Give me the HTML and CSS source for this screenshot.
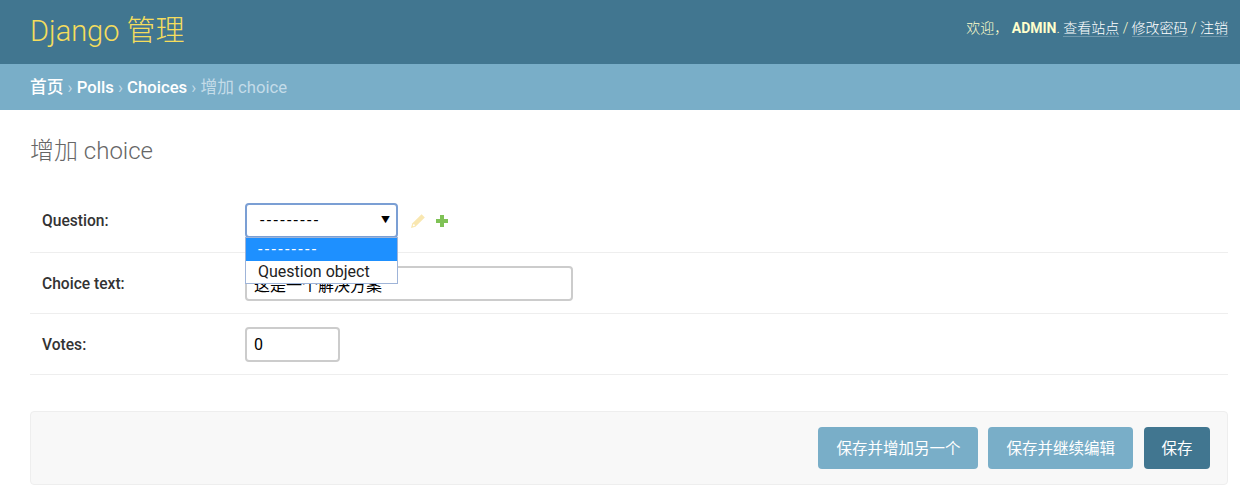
FILE: index.html
```html
<!DOCTYPE html>
<html lang="zh-CN">
<head>
    <meta charset="UTF-8">
    <meta name="viewport" content="width=device-width, initial-scale=1.0">
    <title>增加 choice</title>
    <link rel="stylesheet" href="styles.css">
</head>
<body>

<div class="header">
    <div class="branding">Django 管理</div>
    <div class="user-tools">
        欢迎， <strong>ADMIN</strong>. <a href="#">查看站点</a> / <a href="#">修改密码</a> / <a href="#">注销</a>
    </div>
</div>

<div class="breadcrumbs">
    <a href="#">首页</a> › <a href="#">Polls</a> › <a href="#">Choices</a> › 增加 choice
</div>

<div class="content">
    <h1>增加 choice</h1>

    <form>
        <div class="form-row row-first">
            <label class="field-label">Question:</label>
            <div class="select-wrap">
                <div class="select-box">
                    <span class="dashes">---------</span>
                    <span class="select-arrow">▼</span>
                </div>
                <ul class="select-menu">
                    <li class="selected"><span class="dashes">---------</span></li>
                    <li>Question object</li>
                </ul>
            </div>
            <a href="#" class="related-link" aria-label="修改">
                <svg width="16" height="16" viewBox="0 0 16 16">
                    <path d="M11.6 1.2 14.8 4.4 5.4 13.8 1 15 2.2 10.6Z" fill="#f9e7b0"/>
                    <circle cx="3.8" cy="12.2" r="1" fill="#fff"/>
                </svg>
            </a>
            <a href="#" class="related-link" aria-label="增加">
                <svg width="14" height="14" viewBox="0 0 14 14">
                    <path d="M5 1H9V5H13V9H9V13H5V9H1V5H5Z" fill="#7fc256"/>
                </svg>
            </a>
        </div>

        <div class="form-row">
            <label class="field-label">Choice text:</label>
            <input class="text-input wide" type="text" value="这是一个解决方案">
        </div>

        <div class="form-row">
            <label class="field-label">Votes:</label>
            <input class="text-input narrow" type="text" value="0">
        </div>

        <div class="submit-row">
            <button type="button" class="button">保存并增加另一个</button>
            <button type="button" class="button">保存并继续编辑</button>
            <button type="button" class="button default">保存</button>
        </div>
    </form>
</div>

</body>
</html>
```

FILE: styles.css
```css
body {
    margin: 0;
    font-family: Roboto, "Noto Sans CJK SC", sans-serif;
    font-size: 17px;
    color: #333;
    background: #fff;
}
a {
    text-decoration: none;
}
.header {
    height: 64px;
    box-sizing: border-box;
    padding: 0 12px 0 30px;
    display: flex;
    justify-content: space-between;
    align-items: center;
    background: #417690;
    color: #ffc;
}
.branding {
    font-size: 29px;
    font-weight: 300;
    color: #f5dd5d;
    padding-bottom: 9px;
}
.user-tools {
    font-size: 14px;
    font-weight: 300;
    padding-bottom: 10px;
}
.user-tools strong {
    font-weight: 700;
}
.user-tools a {
    color: #fff;
    border-bottom: 1px solid rgba(255, 255, 255, 0.25);
}
.breadcrumbs {
    height: 46px;
    box-sizing: border-box;
    padding: 0 30px;
    line-height: 48px;
    background: #79aec8;
    color: #c4dce8;
    font-size: 16.7px;
}
.breadcrumbs a {
    color: #fff;
    font-weight: 500;
}
.content {
    padding: 25px 12px 6px 30px;
}
h1 {
    margin: 0 0 21px;
    font-size: 24px;
    font-weight: 300;
    line-height: 32px;
    color: #666;
}
.form-row {
    display: flex;
    align-items: center;
    padding: 13px 0 12px 12px;
    border-bottom: 1px solid #eee;
}
.row-first {
    padding-top: 15px;
    padding-bottom: 14px;
}
.field-label {
    width: 203px;
    flex: none;
    padding-top: 1px;
    font-size: 15.6px;
    font-weight: 500;
    color: #333;
}
.select-wrap {
    position: relative;
    width: 153px;
}
.select-box {
    height: 35px;
    box-sizing: border-box;
    padding: 0 6px 0 13px;
    display: flex;
    justify-content: space-between;
    align-items: center;
    background: #fff;
    border: 2px solid #7b9fd4;
    border-radius: 4px;
    color: #000;
    font-size: 16px;
}
.dashes {
    letter-spacing: 2.3px;
}
.select-arrow {
    font-size: 9px;
    padding-bottom: 3px;
}
.select-menu {
    position: absolute;
    top: 34px;
    left: 0;
    right: 0;
    margin: 0;
    padding: 0;
    list-style: none;
    box-sizing: border-box;
    background: #fff;
    border: 1px solid #9fb4d8;
    color: #222;
    font-size: 16px;
}
.select-menu li {
    height: 22.5px;
    line-height: 22px;
    padding-left: 12px;
}
.select-menu .selected {
    background: #1e90ff;
    color: #fff;
    line-height: 23px;
}
.related-link {
    display: flex;
    margin-left: 12px;
}
.related-link + .related-link {
    margin-left: 9px;
}
.text-input {
    height: 35px;
    box-sizing: border-box;
    padding: 0 7px;
    background: #fff;
    border: 2px solid #ccc;
    border-radius: 4px;
    color: #000;
    font-family: Roboto, "Noto Sans CJK SC", sans-serif;
    font-size: 16px;
}
.wide {
    width: 328px;
}
.narrow {
    width: 95px;
}
.submit-row {
    margin-top: 36px;
    padding: 15px 17px 15px 0;
    display: flex;
    justify-content: flex-end;
    gap: 10px;
    background: #f8f8f8;
    border: 1px solid #eee;
    border-radius: 4px;
}
.button {
    height: 42px;
    padding: 0 18px 2px;
    background: #79aec8;
    color: #fff;
    border: none;
    border-radius: 4px;
    font-family: Roboto, "Noto Sans CJK SC", sans-serif;
    font-size: 15.5px;
    cursor: pointer;
}
.button.default {
    margin-left: 1px;
    padding: 0 17.5px 2px;
    background: #417690;
}
```
